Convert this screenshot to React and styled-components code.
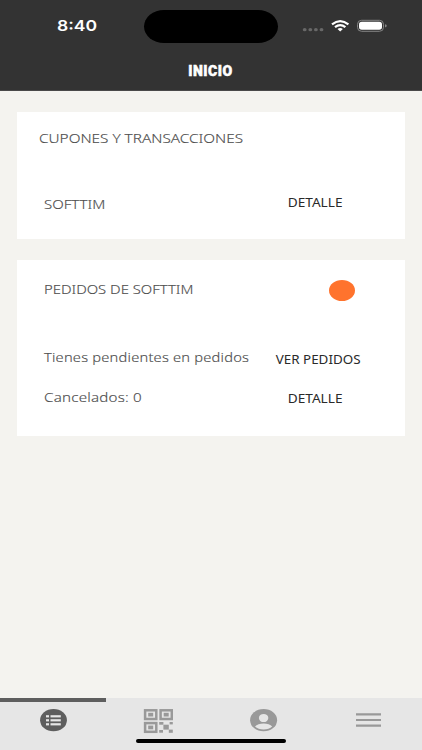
import React, { useState } from "react";
import styled, { createGlobalStyle } from "styled-components";

const GlobalStyle = createGlobalStyle`
  * {
    box-sizing: border-box;
  }

  body {
    margin: 0;
    background-color: #f4f3ef;
  }
`;

const Screen = styled.div`
  display: flex;
  flex-direction: column;
  height: 750px;
  width: 422px;
  overflow: hidden;
  background-color: #f4f3ef;
  font-family: "Noto Sans", "Open Sans", sans-serif;
`;

const Header = styled.header`
  height: 91px;
  background-color: #333333;
  border-bottom: 1px solid #494949;
  color: #fff;
`;

const StatusBar = styled.div`
  display: grid;
  grid-template-columns: 144px 134px 1fr;
  align-items: center;
  height: 52px;
`;

const Time = styled.span`
  padding-left: 57px;
  transform: scaleX(1.17);
  transform-origin: 57px 50%;
  font: 600 15px/20px Inter, sans-serif;
`;

const Island = styled.div`
  height: 33px;
  border-radius: 20px / 16.5px;
  background-color: #000;
`;

const StatusIcons = styled.div`
  display: flex;
  align-items: center;
  padding-left: 24px;
`;

const Title = styled.h1`
  margin: 9px 0 0;
  text-align: center;
  text-indent: -1px;
  letter-spacing: 0.5px;
  -webkit-text-stroke: 0.5px #fff;
  font: 900 14px/20px Roboto, sans-serif;
`;

const Content = styled.main`
  flex: 1;
  display: flex;
  flex-direction: column;
  gap: 21px;
  padding: 21px 17px;
`;

const Card = styled.section`
  height: ${(props) => props.$height}px;
  padding-top: ${(props) => props.$top}px;
  background-color: #fff;
`;

const Row = styled.div`
  display: grid;
  grid-template-columns: 210px 177px;
  grid-template-rows: 20px;
  align-items: center;
  height: 20px;
  margin-top: ${(props) => props.$gap || 0}px;
`;

const Label = styled.span`
  padding-left: ${(props) => props.$indent || 27}px;
  padding-bottom: ${(props) => (props.$raised ? 2 : 0)}px;
  transform: scaleX(${(props) => props.$stretch || 1.1});
  transform-origin: ${(props) => props.$indent || 27}px 50%;
  white-space: nowrap;
  font-size: 13.5px;
  line-height: 20px;
  letter-spacing: ${(props) => props.$spacing || 0}px;
  font-weight: 300;
  -webkit-text-stroke: 0.15px #505050;
  color: #505050;
`;

const LinkButton = styled.button`
  justify-self: center;
  margin: 0 0 0 ${(props) => (props.$wide ? 6 : 0)}px;
  position: relative;
  top: ${(props) => props.$shift || 0}px;
  padding: 0;
  border: none;
  background: none;
  transform: scaleX(${(props) => props.$stretch || 1.05});
  font: 400 13px/20px "Noto Sans", sans-serif;
  color: #2a2a2a;
  cursor: pointer;
`;

const StatusDot = styled.span`
  width: 26px;
  height: 21px;
  margin-left: 102px;
  border-radius: 50%;
  background-color: #ff732d;
`;

const TabBar = styled.nav`
  position: relative;
  display: grid;
  grid-template-columns: repeat(4, 1fr);
  height: 52px;
  background-color: #e6e6e6;
`;

const Tab = styled.button`
  display: flex;
  justify-content: center;
  align-items: flex-start;
  padding: 7px 0 0;
  border: none;
  border-top: 4px solid ${(props) => (props.$active ? "#5e5e5e" : "transparent")};
  background: none;
  color: ${(props) => (props.$active ? "#5e5e5e" : "#999")};
  cursor: pointer;
`;

const HomeIndicator = styled.div`
  position: absolute;
  left: 136px;
  bottom: 7.5px;
  width: 150px;
  height: 4px;
  border-radius: 2px;
  background-color: #000;
`;

const SignalIcon = () => (
  <svg width="88" height="20" viewBox="0 0 88 20">
    <g fill="#686868">
      {[3.5, 9.1, 14.7, 20.3].map((x) => (
        <ellipse key={x} cx={x - 0.8} cy="13.7" rx="1.9" ry="1.6" />
      ))}
    </g>
    <g fill="none" stroke="#fff" strokeWidth="2.2">
      <path d="M30 8.3Q38.2 1.8 46.4 8.3" />
      <path d="M33 11.2Q38.2 7 43.4 11.2" />
    </g>
    <path d="M35.5 12.9Q38.2 10.9 40.9 12.9L38.2 15.4Z" fill="#fff" />
    <rect x="55.5" y="4.3" width="26" height="11" rx="4" fill="none" stroke="#858585" />
    <rect x="57" y="5.8" width="23" height="8" rx="2.8" fill="#fff" />
    <path d="M83 8.2Q84.8 8.5 84.8 9.8T83 11.5Z" fill="#858585" />
  </svg>
);

const ListIcon = () => (
  <svg width="28" height="23" viewBox="0 0 28 23">
    <ellipse cx="14.5" cy="11.2" rx="13.4" ry="11.1" fill="currentColor" />
    <g fill="#e6e6e6">
      {[6.2, 10.2, 14.2].map((y) => (
        <React.Fragment key={y}>
          <rect x="7" y={y} width="3" height="2.2" />
          <rect x="11.5" y={y} width="10.3" height="2.2" />
        </React.Fragment>
      ))}
    </g>
  </svg>
);

const QrIcon = () => (
  <svg width="30" height="25" viewBox="0 0 30 25">
    <g fill="none" stroke="currentColor" strokeWidth="2.5">
      <rect x="2.1" y="1.3" width="11.2" height="8.7" />
      <rect x="17.6" y="1.3" width="11.2" height="8.7" />
      <rect x="2.1" y="14.1" width="11.2" height="8.7" />
    </g>
    <g fill="currentColor">
      <rect x="5.2" y="3.8" width="5" height="3.7" />
      <rect x="20.7" y="3.8" width="5" height="3.7" />
      <rect x="5.2" y="16.6" width="5" height="3.7" />
      <rect x="16.2" y="13" width="4.2" height="2.7" />
      <rect x="26.6" y="13" width="3.2" height="2.4" />
      <rect x="20.4" y="15.7" width="5.4" height="4.9" />
      <rect x="16.2" y="21" width="3.8" height="2.7" />
      <rect x="25.8" y="20.6" width="4" height="3.2" />
    </g>
  </svg>
);

const UserIcon = () => (
  <svg width="28" height="23" viewBox="0 0 28 23">
    <ellipse cx="13.6" cy="11.2" rx="13.5" ry="11.1" fill="currentColor" />
    <ellipse cx="13.6" cy="9" rx="4.7" ry="4.1" fill="#e6e6e6" />
    <path d="M5 17.5C8.2 13.5 19 13.5 22.2 17.5C18.4 21.4 8.8 21.4 5 17.5Z" fill="#e6e6e6" />
  </svg>
);

const MenuIcon = () => (
  <svg width="26" height="23" viewBox="0 0 26 23">
    <path d="M0 5.3h25M0 11h25M0 16.7h25" stroke="currentColor" strokeWidth="2.2" />
  </svg>
);

const tabs = [
  { id: "inicio", icon: ListIcon },
  { id: "qr", icon: QrIcon },
  { id: "perfil", icon: UserIcon },
  { id: "menu", icon: MenuIcon },
];

const App = () => {
  const [activeTab, setActiveTab] = useState("inicio");

  return (
    <Screen>
      <GlobalStyle />
      <Header>
        <StatusBar>
          <Time>8:40</Time>
          <Island />
          <StatusIcons>
            <SignalIcon />
          </StatusIcons>
        </StatusBar>
        <Title>INICIO</Title>
      </Header>

      <Content>
        <Card $height={127} $top={16}>
          <Row>
            <Label $indent={22} $stretch={1.135}>CUPONES Y TRANSACCIONES</Label>
          </Row>
          <Row $gap={46}>
            <Label $stretch={1.11}>SOFTTIM</Label>
            <LinkButton $shift={-2}>DETALLE</LinkButton>
          </Row>
        </Card>

        <Card $height={176} $top={20}>
          <Row>
            <Label $stretch={1.1} $raised>PEDIDOS DE SOFTTIM</Label>
            <StatusDot />
          </Row>
          <Row $gap={47}>
            <Label $stretch={1.085} $spacing={0.2}>Tienes pendientes en pedidos</Label>
            <LinkButton $shift={2} $stretch={1.03} $wide>VER PEDIDOS</LinkButton>
          </Row>
          <Row $gap={20}>
            <Label $stretch={1.12} $spacing={0.2}>Cancelados: 0</Label>
            <LinkButton $shift={1}>DETALLE</LinkButton>
          </Row>
        </Card>
      </Content>

      <TabBar>
        {tabs.map(({ id, icon: Icon }) => (
          <Tab key={id} $active={activeTab === id} onClick={() => setActiveTab(id)}>
            <Icon />
          </Tab>
        ))}
        <HomeIndicator />
      </TabBar>
    </Screen>
  );
};

export default App;
